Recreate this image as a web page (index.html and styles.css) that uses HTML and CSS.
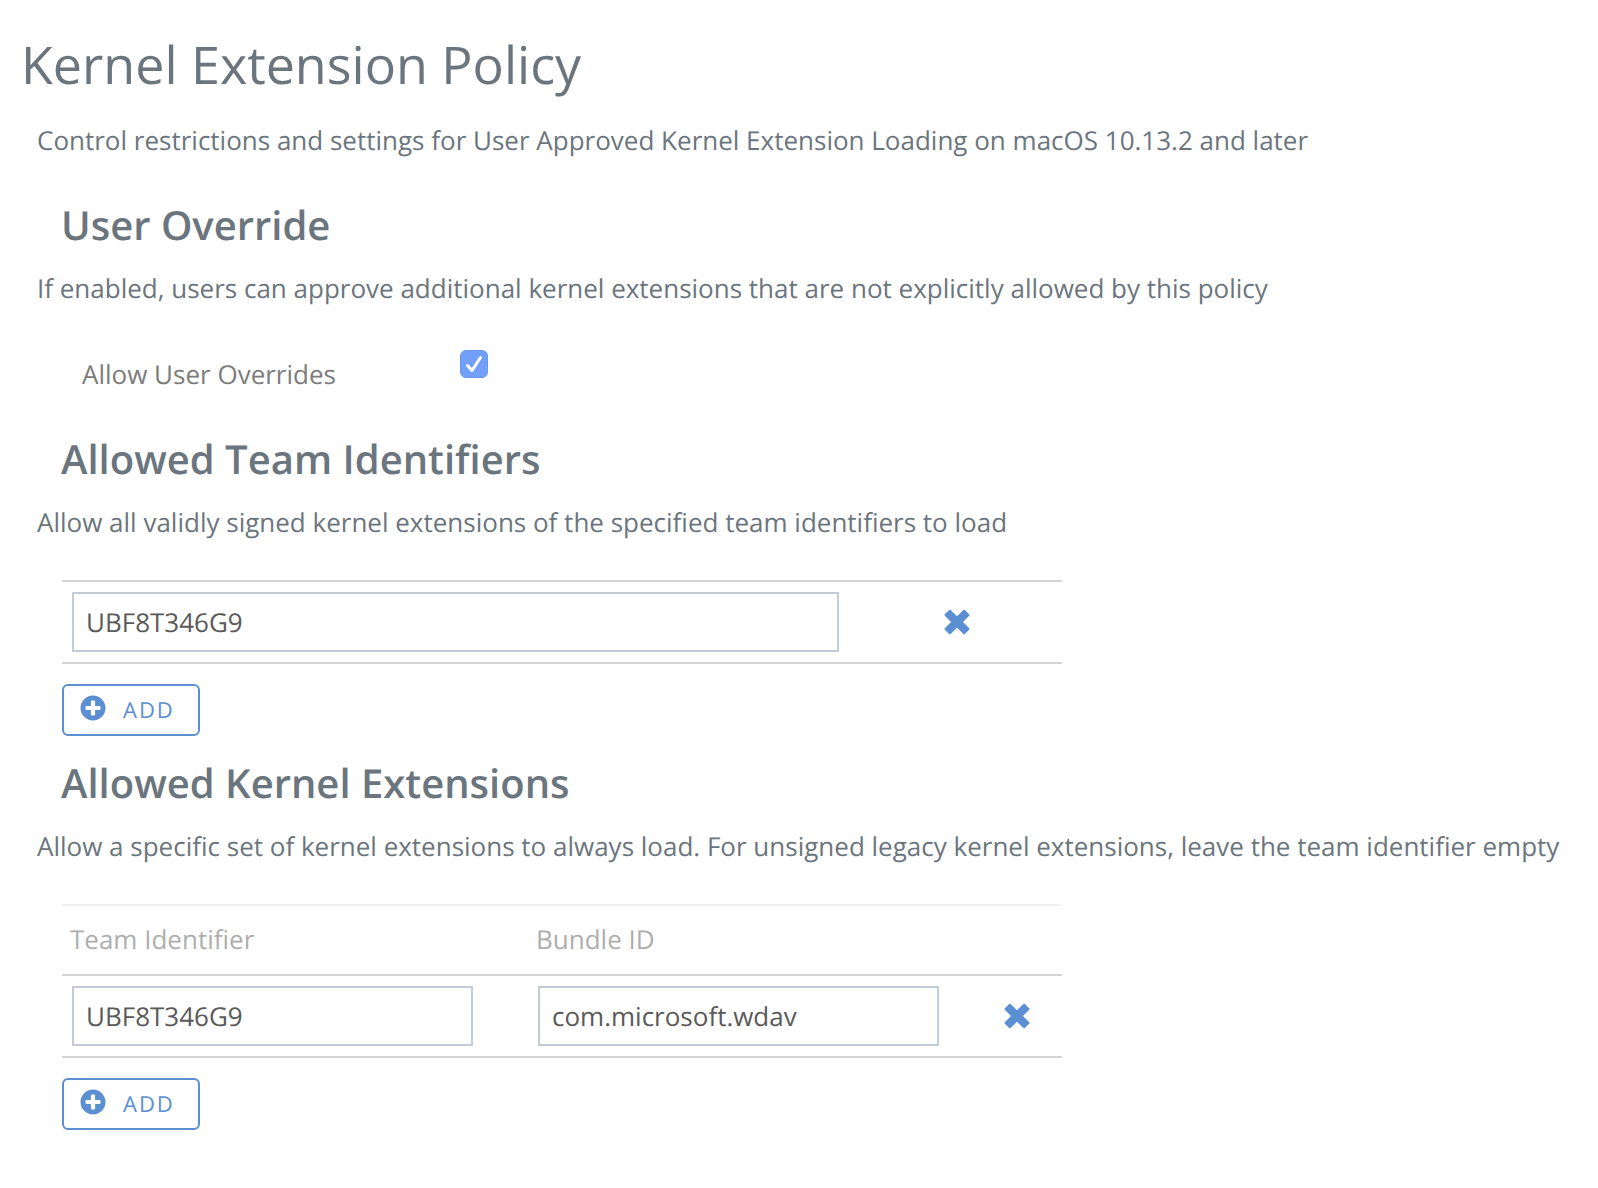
FILE: index.html
```html
<!DOCTYPE html>
<html lang="en">
<head>
<meta charset="utf-8">
<meta name="viewport" content="width=device-width, initial-scale=1">
<title>Kernel Extension Policy</title>
<link rel="stylesheet" href="styles.css">
</head>
<body>
<svg class="sprite" aria-hidden="true">
  <symbol id="icon-plus" viewBox="0 0 26 26">
    <path fill-rule="evenodd" d="M13 0.5a12.5 12.5 0 1 1 0 25a12.5 12.5 0 1 1 0-25zM11.9 5.5a1 1 0 0 0-1 1v4.4H6.5a1 1 0 0 0-1 1v2.2a1 1 0 0 0 1 1h4.4v4.4a1 1 0 0 0 1 1h2.2a1 1 0 0 0 1-1v-4.4h4.4a1 1 0 0 0 1-1v-2.2a1 1 0 0 0-1-1h-4.4V6.5a1 1 0 0 0-1-1z"/>
  </symbol>
  <symbol id="icon-remove" viewBox="0 0 26 26">
    <path d="M5.2 0.900a1 1 0 0 1 1.400 0L13 7.300l6.400-6.400a1 1 0 0 1 1.400 0l4.400 4.400a1 1 0 0 1 0 1.400L19 13l6.200 6.300a1 1 0 0 1 0 1.400l-4.400 4.400a1 1 0 0 1-1.400 0L13 18.700l-6.400 6.400a1 1 0 0 1-1.400 0L0.800 20.700a1 1 0 0 1 0-1.400L7 13 0.800 6.700a1 1 0 0 1 0-1.400z"/>
  </symbol>
</svg>
<main class="policy">
  <h1 class="policy-title">Kernel Extension Policy</h1>
  <p class="description">Control restrictions and settings for User Approved Kernel Extension Loading on macOS 10.13.2 and later</p>

  <section class="section">
    <h2 class="section-title">User Override</h2>
    <p class="description">If enabled, users can approve additional kernel extensions that are not explicitly allowed by this policy</p>
    <div class="option">
      <label class="option-label" for="allow-overrides">Allow User Overrides</label>
      <span class="check">
        <input class="check-input" type="checkbox" id="allow-overrides" checked>
        <svg class="check-mark" viewBox="0 0 28 28" aria-hidden="true"><path d="M7.500 15.500l4.500 5L20.500 7.500"/></svg>
      </span>
    </div>
  </section>

  <section class="section">
    <h2 class="section-title">Allowed Team Identifiers</h2>
    <p class="description">Allow all validly signed kernel extensions of the specified team identifiers to load</p>
    <table class="list">
      <colgroup><col><col class="col-remove-wide"></colgroup>
      <tbody>
        <tr>
          <td class="cell"><input class="field field-wide" type="text" aria-label="Team Identifier" value="UBF8T346G9"></td>
          <td class="cell"><button class="remove" type="button" aria-label="Remove"><svg class="icon"><use href="#icon-remove"/></svg></button></td>
        </tr>
      </tbody>
    </table>
    <button class="add" type="button"><svg class="icon add-icon"><use href="#icon-plus"/></svg>ADD</button>
  </section>

  <section class="section section-after-list">
    <h2 class="section-title">Allowed Kernel Extensions</h2>
    <p class="description">Allow a specific set of kernel extensions to always load. For unsigned legacy kernel extensions, leave the team identifier empty</p>
    <table class="list list-headed">
      <colgroup><col class="col-team"><col><col class="col-remove"></colgroup>
      <thead>
        <tr>
          <th class="heading" scope="col">Team Identifier</th>
          <th class="heading" scope="col">Bundle ID</th>
          <td class="heading"></td>
        </tr>
      </thead>
      <tbody>
        <tr>
          <td class="cell"><input class="field" type="text" aria-label="Team Identifier" value="UBF8T346G9"></td>
          <td class="cell"><input class="field" type="text" aria-label="Bundle ID" value="com.microsoft.wdav"></td>
          <td class="cell"><button class="remove" type="button" aria-label="Remove"><svg class="icon"><use href="#icon-remove"/></svg></button></td>
        </tr>
      </tbody>
    </table>
    <button class="add" type="button"><svg class="icon add-icon"><use href="#icon-plus"/></svg>ADD</button>
  </section>
</main>
</body>
</html>
```
FILE: styles.css
```css
*, *::before, *::after { box-sizing: border-box; }

body {
  margin: 0;
  background: #fff;
  color: #6b757e;
  font: 400 26px/36px "Open Sans", "Noto Sans", sans-serif;
  text-rendering: geometricPrecision;
}

.sprite { display: none; }

.policy { padding: 30px 21px 58px; }

.policy-title {
  margin: 0 0 22px;
  font-size: 52px;
  font-weight: 400;
  line-height: 70px;
}

.description { margin: 0 0 0 16px; }

.section { margin-top: 40px; }
.section-after-list { margin-top: 20px; }

.section-title {
  margin: 0 0 18px 40px;
  font-size: 40px;
  font-weight: 600;
  line-height: 54px;
}

.option {
  display: flex;
  align-items: flex-start;
  margin: 40px 0 0 61px;
}

.option-label {
  width: 378px;
  padding-top: 10px;
  color: #7c7c7c;
}

.check {
  display: grid;
  width: 28px;
  height: 28px;
  margin-top: 4px;
}

.check-input,
.check-mark { grid-area: 1 / 1; }

.check-input {
  appearance: none;
  width: 28px;
  height: 28px;
  margin: 0;
  border: 1px solid #6797f5;
  border-radius: 6px;
  background: #729ff8;
}

.check-mark {
  width: 28px;
  height: 28px;
  fill: none;
  stroke: #fff;
  stroke-width: 3;
  stroke-linecap: round;
  stroke-linejoin: round;
  pointer-events: none;
  visibility: hidden;
}

.check-input:checked + .check-mark { visibility: visible; }

.list {
  width: 100%;
  max-width: 1000px;
  margin: 40px 0 20px 41px;
  border-spacing: 0;
  border-top: 2px solid #d4d4d4;
  table-layout: fixed;
}

.list-headed { border-top-color: #f0f0f0; }

.col-team { width: 466px; }
.col-remove { width: 90px; }
.col-remove-wide { width: 210px; }

.heading {
  padding: 15px 8px 17px;
  border-bottom: 2px solid #d4d4d4;
  color: #aeaeae;
  font-weight: 400;
  text-align: left;
}

.cell {
  padding: 10px;
  border-bottom: 2px solid #d4d4d4;
}

.field {
  display: block;
  width: 100%;
  max-width: 401px;
  height: 60px;
  padding: 0 12px;
  border: 2px solid #c3ccd6;
  border-radius: 0;
  background: #fff;
  color: #5a5a5a;
  font: inherit;
  text-rendering: inherit;
}

.field-wide { max-width: 767px; }

.remove {
  display: block;
  margin: 0 auto;
  padding: 0;
  border: 0;
  background: none;
  color: #5b8fd2;
  cursor: pointer;
}

.icon {
  display: block;
  width: 26px;
  height: 26px;
  fill: currentColor;
}

.add {
  display: flex;
  align-items: center;
  height: 52px;
  margin-left: 41px;
  padding: 0 23px 0 16px;
  border: 2px solid #5b8fd2;
  border-radius: 6px;
  background: #fff;
  color: #5b8fd2;
  font: 400 22px/30px "Open Sans", "Noto Sans", sans-serif;
  letter-spacing: 2px;
  text-rendering: inherit;
  cursor: pointer;
}

.add-icon { margin: 0 17px 4px 0; }
```
